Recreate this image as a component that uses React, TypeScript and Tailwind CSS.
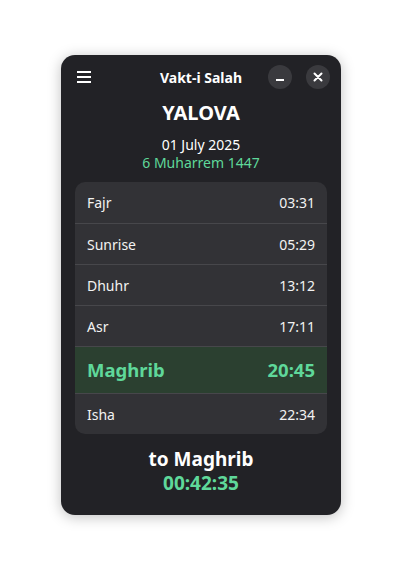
import React from "react";

const times = [
  { name: "Fajr", time: "03:31" },
  { name: "Sunrise", time: "05:29" },
  { name: "Dhuhr", time: "13:12" },
  { name: "Asr", time: "17:11" },
  { name: "Maghrib", time: "20:45", active: true },
  { name: "Isha", time: "22:34" },
];

const App = () => {
  return (
    <div
      className="min-h-[582px] w-full bg-white flex justify-center pt-[55px]"
      style={{ fontFamily: "'Noto Sans', 'Open Sans', sans-serif" }}
    >
      <div className="w-[280px] h-[460px] rounded-[14px] bg-[#222226] text-white shadow-[0_2px_14px_rgba(0,0,0,0.25)] flex flex-col">
        {/* header */}
        <div className="h-[44px] flex items-center pl-[16px] pr-[11px] relative">
          <div className="flex flex-col gap-[3px] w-[14px]">
            <span className="h-[2px] bg-white" />
            <span className="h-[2px] bg-white" />
            <span className="h-[2px] bg-white" />
          </div>
          <div className="absolute left-0 right-0 text-center text-[14px] font-bold pointer-events-none">
            Vakt-i Salah
          </div>
          <div className="ml-auto flex items-center gap-[14px]">
            <button className="w-[24px] h-[24px] rounded-full bg-[#3a3a3e] flex items-center justify-center">
              <span className="w-[8px] h-[2px] bg-white mt-[6px]" />
            </button>
            <button className="w-[24px] h-[24px] rounded-full bg-[#3a3a3e] flex items-center justify-center">
              <svg width="10" height="10" viewBox="0 0 10 10">
                <path d="M1.5 1.5 L8.5 8.5 M8.5 1.5 L1.5 8.5" stroke="white" strokeWidth="2" strokeLinecap="round" />
              </svg>
            </button>
          </div>
        </div>

        <div className="text-center text-[20px] font-bold leading-[28px]">YALOVA</div>
        <div className="text-center text-[14px] leading-[18px] mt-[9px]">01 July 2025</div>
        <div className="text-center text-[14px] leading-[18px] text-[#5fd89a]">6 Muharrem 1447</div>

        <div className="mx-[14px] mt-[10px] rounded-[10px] bg-[#323236] overflow-hidden">
          {times.map((t, i) => (
            <div
              key={t.name}
              className={
                (t.active
                  ? "h-[47px] bg-[#2b4030] text-[#5fd89a] font-bold text-[18.5px] "
                  : "h-[41px] text-[14px] text-[#f2f2f2] ") +
                "flex items-center justify-between px-[12px] " +
                (i > 0 ? "border-t border-[#47474b]" : "")
              }
            >
              <span>{t.name}</span>
              <span>{t.time}</span>
            </div>
          ))}
        </div>

        <div className="text-center text-[19px] font-bold leading-[25px] mt-[13px]">to Maghrib</div>
        <div className="text-center text-[19px] font-bold leading-[24px] -mt-[1px] text-[#5fd89a]">00:42:35</div>
      </div>
    </div>
  );
};

export default App;
